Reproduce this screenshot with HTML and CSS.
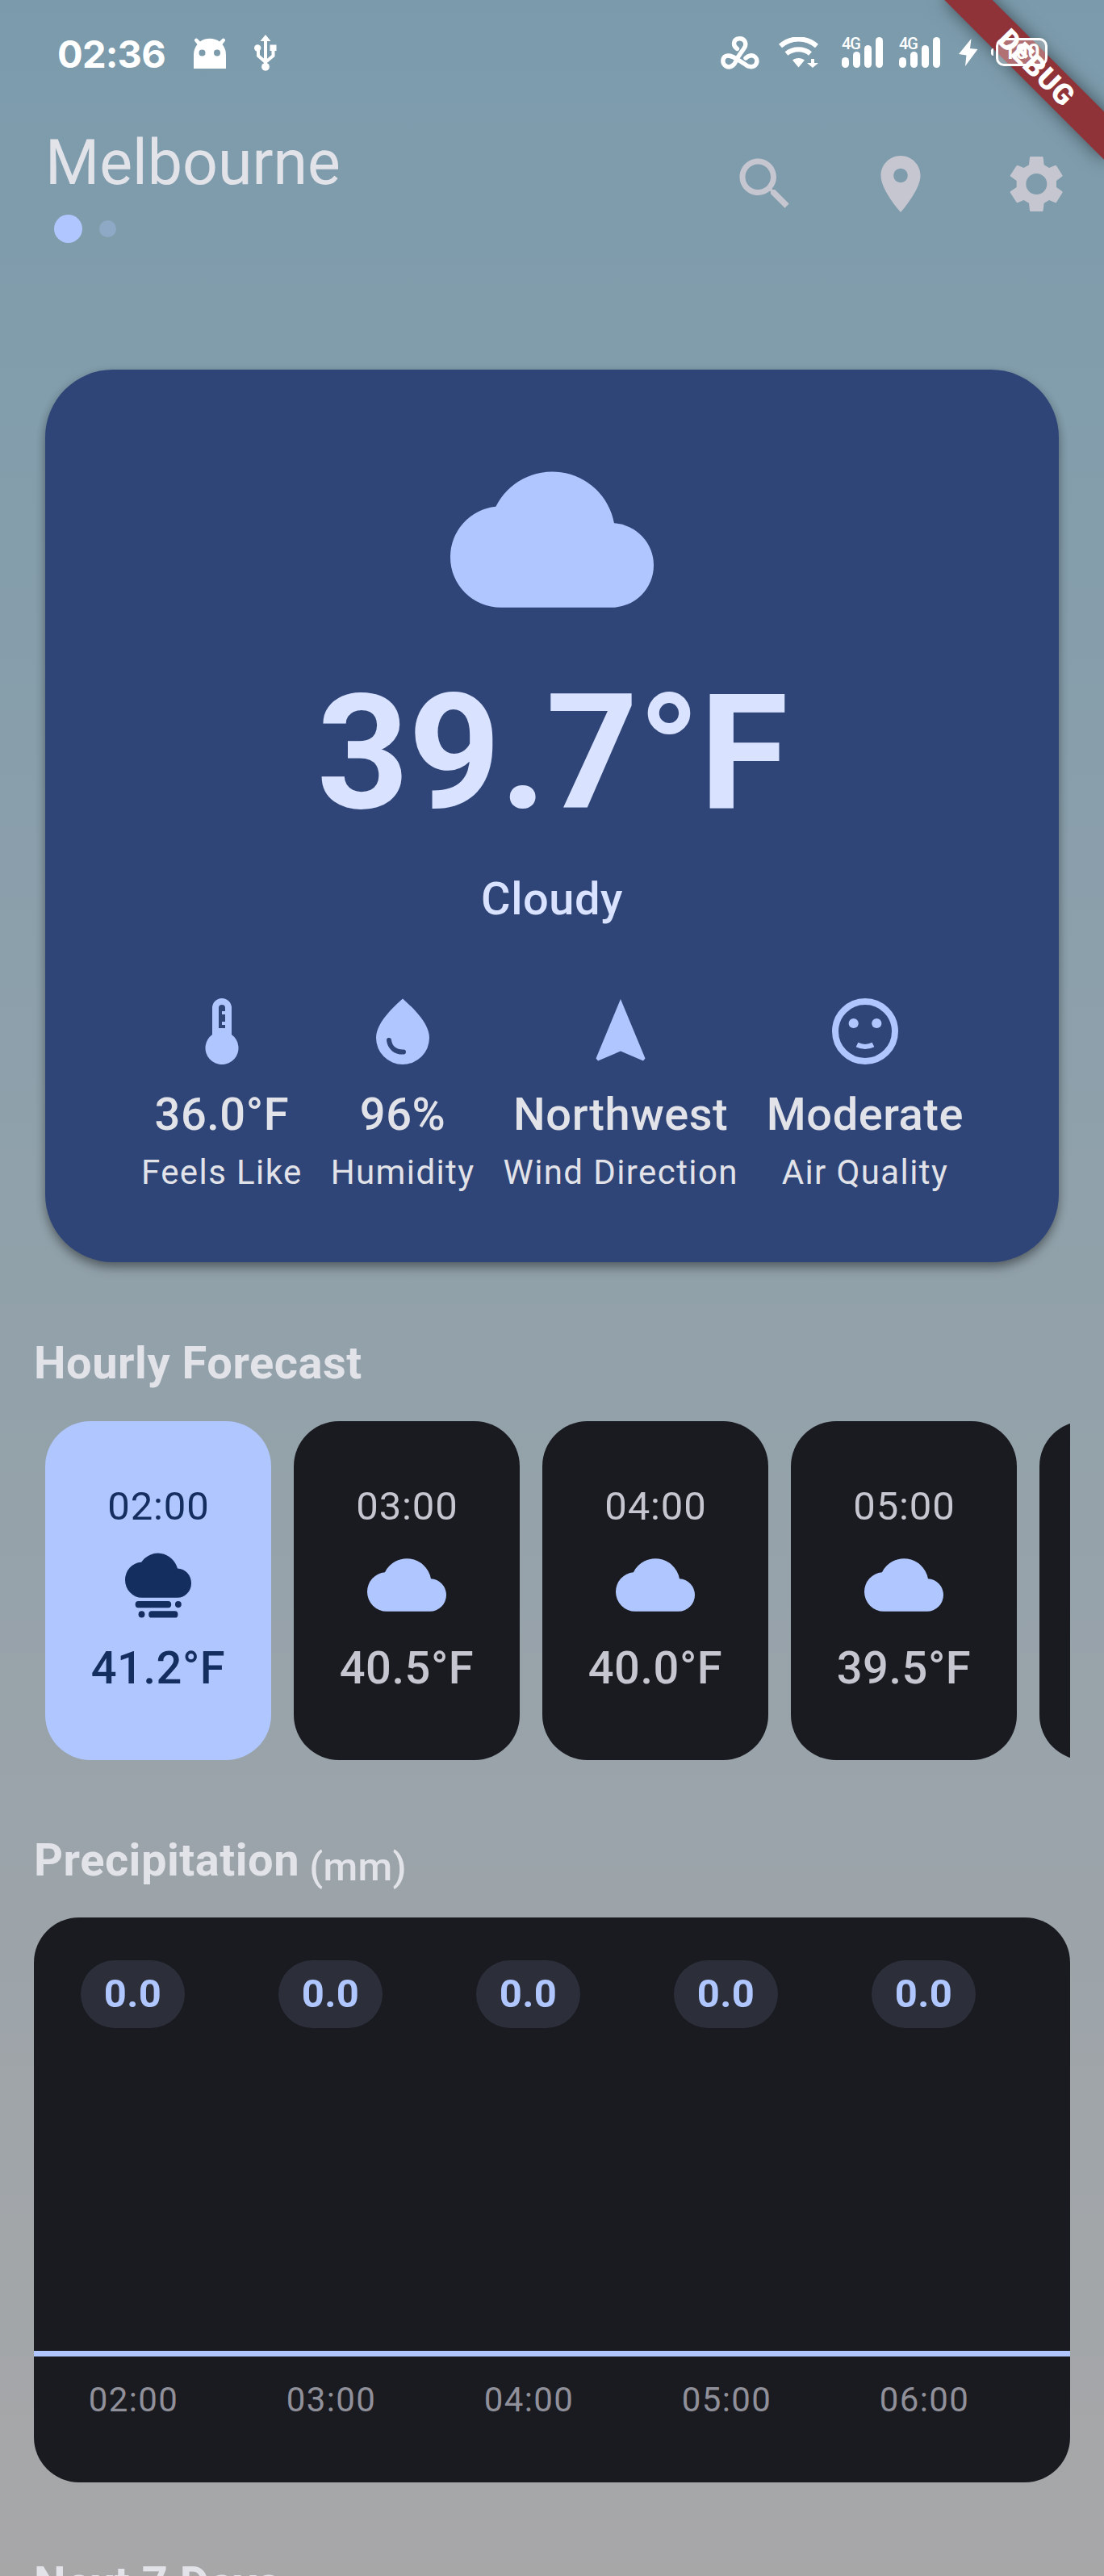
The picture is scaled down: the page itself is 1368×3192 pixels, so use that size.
FILE: index.html
```html
<!DOCTYPE html>
<html lang="en">
<head>
<meta charset="utf-8">
<title>Weather</title>
<link rel="stylesheet" href="styles.css">
</head>
<body>
<svg width="0" height="0" class="defs">
  <symbol id="cloud" viewBox="485 108 617 413">
    <path d="M638 521A153 153 0 0 1 485 368A153 153 0 0 1 623 215A191 191 0 0 1 982 265A128 128 0 0 1 1102 393A128 128 0 0 1 974 521Z"/>
  </symbol>
</svg>
<div class="screen">
  <div class="statusbar">
    <div class="status-left">
      <span class="clock">02:36</span>
      <svg class="i-android" viewBox="0 0 40 38"><path fill-rule="evenodd" d="M0 38V21C0 15 2 11 4.500 8L1 3.500C.5 1 3.500-.5 5 1.500L8 4.500C15-.5 25-.5 32 4.500L35 1.500C36.500-.5 39.500 1 39 3.500L35.500 8C38 11 40 15 40 21V38ZM10.500 14.500a3.700 3.700 0 1 0 0 8a3.700 3.700 0 1 0 0-8ZM29 14.500a3.700 3.700 0 1 0 0 8a3.700 3.700 0 1 0 0-8Z"/></svg>
      <svg class="i-usb" viewBox="0 0 28 45"><path d="M14 0L20.500 8H7.500Z"/><path class="line" d="M14 6V38M14 34L5 26V17M14 34L23.500 26V17"/><circle cx="4.200" cy="16.500" r="4.200"/><rect x="19.500" y="12.500" width="8" height="7.500"/><circle cx="14" cy="39.800" r="4.900"/></svg>
    </div>
    <div class="status-right">
      <svg class="i-swirl" viewBox="0 0 48 41"><path d="M20.500 15.500C14 11 16 2.800 23.500 2.800C30 2.800 32.500 9 29.500 14C27 18.500 21 25 18.500 31.500C16 37.500 10 39.500 6 36.500C1.500 33 2 26.500 6.500 24.500C13 21.500 22 30 30 34.500C36 39.500 43 38.500 44.700 32.500C46 27 41.500 23 36.500 24C33.500 24.500 32 26 31 27"/></svg>
      <svg class="i-wifi" viewBox="0 0 49 38"><path class="line" d="M2 11C15-.5 34-.5 47 11M9.500 20.500C18 13.500 31 13.500 39 20.500"/><path d="M17 28.500C21 25 28 25 32 28.500L24.500 37.500ZM40 27h4v5h5l-7 6l-7-6h5Z"/></svg>
      <div class="signal"><span class="gen">4G</span><i></i><i></i><i></i><i></i></div>
      <div class="signal"><span class="gen">4G</span><i></i><i></i><i></i><i></i></div>
      <svg class="i-bolt" viewBox="0 0 24 34"><path d="M15.500 0L0 19L9.500 20.500L8 34L23.500 13L14 12Z"/></svg>
      <div class="battery"><span class="nub"></span><span class="cell">100</span></div>
    </div>
  </div>

  <header class="appbar">
    <div class="place">
      <h1>Melbourne</h1>
      <div class="dots"><span class="dot on"></span><span class="dot"></span></div>
    </div>
    <nav class="actions">
      <svg viewBox="0 0 24 24"><path d="M15.500 14h-.79l-.28-.27C15.410 12.590 16 11.110 16 9.500 16 5.910 13.090 3 9.500 3S3 5.910 3 9.500 5.910 16 9.500 16c1.610 0 3.090-.59 4.230-1.570l.27.28v.79l5 4.990L20.490 19l-4.990-5zm-6 0C7.010 14 5 11.990 5 9.500S7.010 5 9.500 5 14 7.010 14 9.500 11.990 14 9.500 14z"/></svg>
      <svg viewBox="0 0 24 24"><path d="M12 2C8.130 2 5 5.130 5 9c0 5.250 7 13 7 13s7-7.750 7-13c0-3.870-3.130-7-7-7zm0 9.500c-1.380 0-2.500-1.120-2.500-2.500s1.120-2.500 2.500-2.500 2.500 1.120 2.500 2.500-1.120 2.500-2.500 2.500z"/></svg>
      <svg viewBox="1173 582 196 204" class="i-gear"><path fill-rule="evenodd" d="M1251 582H1293Q1296 582 1297 585L1300 613L1319 624L1341 615Q1345 614 1347 617L1368 651Q1370 654 1367 656L1346 672V696L1367 711Q1370 713 1368 717L1347 751Q1345 755 1341 753L1319 744L1300 755L1297 782Q1296 786 1293 786H1251Q1248 786 1247 782L1244 755L1225 744L1203 753Q1199 755 1197 751L1175 717Q1173 713 1176 711L1198 696V672L1176 656Q1173 654 1175 651L1197 617Q1199 614 1203 615L1225 624L1244 613L1247 585Q1248 582 1251 582ZM1272 645a39 39 0 1 0 0 78a39 39 0 1 0 0-78Z"/></svg>
    </nav>
  </header>

  <section class="hero">
    <svg class="hero-cloud"><use href="#cloud"/></svg>
    <div class="hero-temp">39.7°F</div>
    <div class="hero-desc">Cloudy</div>
    <div class="stats">
      <div class="stat">
        <svg viewBox="0 0 82 82"><path fill-rule="evenodd" d="M29 45V12A12 12 0 0 1 53 12V45A20.500 20.500 0 1 1 29 45ZM37 37V12A4 4 0 0 1 45 12V16H41V20H45V29H41V33H45V37Z"/></svg>
        <b>36.0°F</b><span>Feels Like</span>
      </div>
      <div class="stat">
        <svg viewBox="0 0 82 82"><path d="M41 0.500C52 10.500 74 30 74 49A33 33 0 0 1 8 49C8 30 30 10.500 41 .5Z"/><path class="cut" d="M24 52C25 61 32 67 42 66.500"/></svg>
        <b>96%</b><span>Humidity</span>
      </div>
      <div class="stat">
        <svg viewBox="0 0 82 82"><path d="M41 1L71.500 74.500L69 77.500L41 65.500L13 77.500L10.500 74.500Z"/></svg>
        <b>Northwest</b><span>Wind Direction</span>
      </div>
      <div class="stat">
        <svg viewBox="0 0 82 82"><circle class="ring" cx="41" cy="41" r="37"/><circle cx="26.700" cy="31" r="6.100"/><circle cx="55.300" cy="31" r="6.100"/><path class="ring mouth" d="M31 57.500Q41 62.500 51 57.500"/></svg>
        <b>Moderate</b><span>Air Quality</span>
      </div>
    </div>
  </section>

  <h2 class="hourly-title">Hourly Forecast</h2>
  <div class="hours">
    <div class="hour now"><time>02:00</time>
      <svg viewBox="355 921 188 179" class="fog" preserveAspectRatio="none"><path d="M403 1045A48 48 0 0 1 355 997A48 48 0 0 1 401 949A58 58 0 0 1 504 966A39.500 39.500 0 0 1 543 1006A39.500 39.500 0 0 1 504 1045Z"/><rect x="384" y="1054" width="102" height="18" rx="8.500"/><circle cx="506" cy="1063" r="9"/><circle cx="402" cy="1090" r="9"/><rect x="422" y="1081" width="83" height="18" rx="8.500"/></svg>
      <b>41.2°F</b></div>
    <div class="hour"><time>03:00</time><svg><use href="#cloud"/></svg><b>40.5°F</b></div>
    <div class="hour"><time>04:00</time><svg><use href="#cloud"/></svg><b>40.0°F</b></div>
    <div class="hour"><time>05:00</time><svg><use href="#cloud"/></svg><b>39.5°F</b></div>
    <div class="hour"></div>
  </div>

  <h2 class="rain-title">Precipitation <small>(mm)</small></h2>
  <section class="chart">
    <div class="row values"><span><b>0.0</b></span><span><b>0.0</b></span><span><b>0.0</b></span><span><b>0.0</b></span><span><b>0.0</b></span></div>
    <div class="baseline"></div>
    <div class="row times"><span>02:00</span><span>03:00</span><span>04:00</span><span>05:00</span><span>06:00</span></div>
  </section>

  <h2 class="week-title">Next 7 Days</h2>
  <div class="banner">DEBUG</div>
</div>
</body>
</html>
```
FILE: styles.css
```css
* { box-sizing: border-box; margin: 0; }
body { font-family: Roboto, sans-serif; }
.defs { position: absolute; }
svg { display: block; flex: none; }

.screen {
  position: relative;
  width: 1368px;
  height: 3192px;
  overflow: hidden;
  background: linear-gradient(#7b9bac, #a7a7a8);
  color: #e2e2e9;
}

/* Status bar */
.statusbar {
  position: relative;
  z-index: 2;
  display: flex;
  justify-content: space-between;
  height: 132px;
  padding: 0 70px 0 71px;
  color: #fff;
  fill: #fff;
}
.status-left, .status-right { display: flex; align-items: flex-start; }
.clock { width: 169px; margin-top: 38px; font: 700 47px/57px Inter, sans-serif; letter-spacing: -.8px; white-space: nowrap; }
.i-android { width: 40px; height: 38px; margin-top: 47px; }
.i-usb { width: 28px; height: 45px; margin: 43px 0 0 35px; }
.i-usb .line { fill: none; stroke: #fff; stroke-width: 4; }
.i-swirl { width: 48px; height: 41px; margin: 45px 24px 0 0; fill: none; stroke: #fff; stroke-width: 5.4; stroke-linecap: round; }
.i-wifi { width: 49px; height: 38px; margin: 46px 29px 0 0; }
.i-wifi .line { fill: none; stroke: #fff; stroke-width: 6; }
.signal { position: relative; display: flex; align-items: flex-end; gap: 5px; width: 51px; height: 38px; margin: 46px 20px 0 0; }
.signal i { width: 9px; height: 13px; border-radius: 4.500px; background: #fff; }
.signal i:nth-of-type(2) { height: 20px; }
.signal i:nth-of-type(3) { height: 28px; }
.signal i:nth-of-type(4) { height: 38px; }
.gen { position: absolute; left: 0; top: -2px; font: 500 20px/20px Roboto, sans-serif; letter-spacing: -1px; }
.i-bolt { width: 24px; height: 34px; margin: 48px 16px 0 3px; }
.battery { display: flex; align-items: center; gap: 3px; margin-top: 47px; }
.nub { width: 3px; height: 9px; border-radius: 3px 0 0 3px; background: #fff; }
.cell { width: 64px; height: 35px; border: 3px solid #fff; border-radius: 10px; background: rgba(255,255,255,.3); font: 700 26px/29px Roboto, sans-serif; text-align: center; }

/* Debug ribbon across the top-right corner */
.banner {
  position: absolute;
  left: 1144px;
  top: 63px;
  width: 280px;
  height: 42px;
  transform: rotate(45deg);
  background: #8f3338;
  box-shadow: 0 0 21px rgba(0,0,0,.5);
  color: #fff;
  font-size: 35.700px;
  font-weight: 900;
  line-height: 42px;
  letter-spacing: .7px;
  text-align: center;
}

/* App bar */
.appbar { display: flex; justify-content: space-between; height: 326px; padding: 0 42px 0 56px; }
.place h1 { margin-top: 21px; font-weight: 400; font-size: 77px; line-height: 98px; }
.dots { display: flex; align-items: center; gap: 21px; margin: 15px 0 0 10.500px; }
.dot { width: 21px; height: 21px; border-radius: 50%; background: rgba(176,198,255,.3); }
.dot.on { width: 35px; height: 35px; background: #b0c6ff; }
.actions { display: flex; gap: 84px; padding-top: 54px; fill: #c6c6d0; }
.actions svg { width: 84px; height: 84px; }
.actions .i-gear { width: 66px; height: 68px; margin: 8px 9px; }

/* Current conditions */
.hero {
  display: flex;
  flex-direction: column;
  align-items: center;
  width: 1256px;
  height: 1106px;
  margin-left: 56px;
  padding-top: 126px;
  border-radius: 84px;
  background: #2f4578;
  box-shadow: 0 9px 14px -2px rgba(0,0,0,.3), 0 3px 12px rgba(0,0,0,.2);
  fill: #b0c6ff;
}
.hero-cloud { width: 252px; height: 169px; }
.hero-temp { margin-top: 63px; color: #d9e2ff; font-size: 199.500px; font-weight: 700; line-height: 234px; letter-spacing: -.875px; }
.hero-desc { margin-top: 22px; color: #d9e2ff; font-size: 56px; font-weight: 500; line-height: 84px; letter-spacing: .525px; }
.stats { display: flex; justify-content: center; gap: 35px; margin-top: 81px; padding-left: 1px; }
.stat { display: flex; flex-direction: column; align-items: center; }
.stat svg { width: 82px; height: 82px; }
.stat b { margin-top: 20px; font-size: 56px; font-weight: 500; line-height: 84px; letter-spacing: .525px; }
.stat span { margin-top: 2px; font-size: 42px; line-height: 56px; letter-spacing: 1.400px; }
.cut { fill: none; stroke: #2f4578; stroke-width: 6; stroke-linecap: round; }
.ring { fill: none; stroke: #b0c6ff; stroke-width: 8; }
.mouth { stroke-width: 6; }

/* Hourly strip */
h2 { height: 84px; padding-left: 42px; font-size: 56px; font-weight: 700; line-height: 84px; letter-spacing: .525px; }
.hourly-title { margin-top: 83px; }
.hours { display: flex; gap: 28px; width: 1284px; height: 420px; margin: 30px 0 0 42px; padding-left: 14px; overflow: hidden; }
.hour {
  display: flex;
  flex: none;
  flex-direction: column;
  align-items: center;
  width: 280px;
  height: 420px;
  padding-top: 71px;
  border-radius: 56px;
  background: #1a1b20;
  color: #c6c6d0;
  fill: #b0c6ff;
}
.hour.now { background: #b0c6ff; color: #152e60; fill: #152e60; }
.hour time { padding-left: 1px; font-size: 49px; line-height: 70px; letter-spacing: .875px; }
.hour svg { width: 98px; height: 66px; margin: 29px 0 28px; }
.hour .fog { width: 82px; height: 82px; margin: 21px 0 20px; }
.hour b { font-size: 56px; font-weight: 500; line-height: 84px; letter-spacing: .525px; }

/* Precipitation chart */
.rain-title { display: flex; gap: 12px; margin-top: 82px; }
.rain-title small { padding-top: 9px; font-size: 49px; font-weight: 500; letter-spacing: .35px; }
.chart { width: 1284px; height: 700px; margin: 29px 0 0 42px; padding-top: 53px; border-radius: 56px; background: #1a1b20; overflow: hidden; }
.row { display: flex; }
.row span { width: 245px; text-align: center; }
.values { height: 484px; }
.values b { display: inline-block; height: 84px; padding: 0 29px; border-radius: 42px; background: #2c2f3a; color: #b0c6ff; font-size: 49px; line-height: 84px; letter-spacing: .35px; }
.baseline { height: 7px; background: #b0c6ff; }
.times { padding: 26px 0 0 1px; color: #90909a; font-size: 42px; line-height: 56px; letter-spacing: 1.400px; }

.week-title { margin-top: 83px; white-space: nowrap; }
```
